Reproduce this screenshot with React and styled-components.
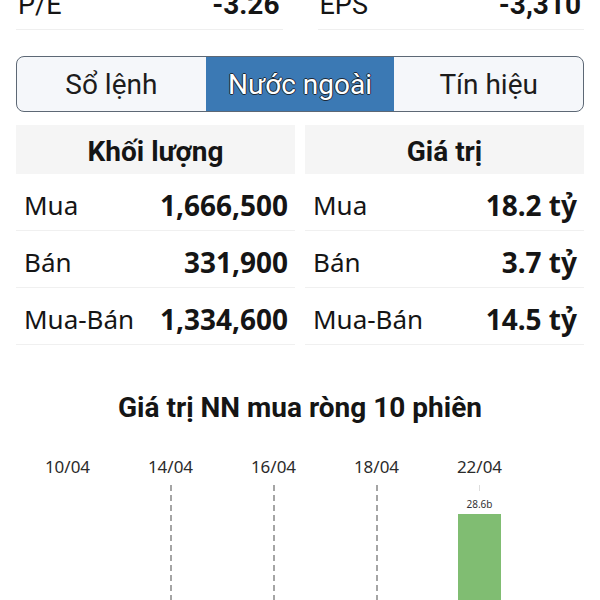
import React from 'react';
import styled, { createGlobalStyle } from 'styled-components';

const GlobalStyle = createGlobalStyle`
  html, body {
    margin: 0;
    padding: 0;
    background: #ffffff;
    overflow: hidden;
  }
  * {
    box-sizing: border-box;
  }
`;

const Page = styled.div`
  width: 600px;
  height: 600px;
  padding: 0 16px;
  overflow: hidden;
  color: #151515;
`;

const StatsRow = styled.div`
  display: grid;
  grid-template-columns: 1fr 1fr;
  column-gap: 35px;
  margin-top: -20px;
`;

const StatCell = styled.div`
  display: flex;
  align-items: center;
  justify-content: space-between;
  height: 50px;
  padding: 0 3px 0 2px;
  border-bottom: 1px solid #efefef;
  font-family: Roboto, 'Noto Sans', sans-serif;
  font-size: 27px;
`;

const StatValue = styled.span`
  font-weight: 700;
  font-size: 28px;
`;

const Tabs = styled.div`
  display: grid;
  grid-template-columns: 1fr 1fr 1fr;
  height: 56px;
  margin-top: 26px;
  border: 1.5px solid #5d6875;
  border-radius: 8px;
  overflow: hidden;
  background: #f5f7fa;
`;

const Tab = styled.div`
  display: flex;
  align-items: center;
  justify-content: center;
  font-family: Roboto, 'Noto Sans', sans-serif;
  font-size: 28px;
  color: ${({ active }) => (active ? '#ffffff' : '#1c1c1c')};
  background: ${({ active }) => (active ? '#3b79b4' : 'transparent')};
  text-shadow: ${({ active }) =>
    active
      ? '1px 0 0 #1d2a38, -1px 0 0 #1d2a38, 0 1px 0 #1d2a38, 0 -1px 0 #1d2a38'
      : 'none'};
`;

const Table = styled.div`
  display: grid;
  grid-template-columns: 1fr 1fr;
  column-gap: 10px;
  margin-top: 13px;
`;

const Column = styled.div`
  display: flex;
  flex-direction: column;
`;

const ColumnHeader = styled.div`
  display: flex;
  align-items: center;
  justify-content: center;
  height: 49px;
  padding-top: 4px;
  background: #f5f5f5;
  font-family: Roboto, 'Noto Sans', sans-serif;
  font-weight: 700;
  font-size: 28px;
`;

const Row = styled.div`
  display: flex;
  align-items: center;
  justify-content: space-between;
  height: 57px;
  padding: 5px 7px 0 8px;
  border-bottom: 1px solid #f0f0f0;
  font-family: 'Noto Sans', 'Open Sans', sans-serif;
  font-size: 26px;
`;

const RowValue = styled.span`
  font-weight: 700;
  font-size: 28px;
`;

const ChartTitle = styled.h2`
  margin: 48px 0 0;
  line-height: 30px;
  text-align: center;
  font-family: Roboto, 'Noto Sans', sans-serif;
  font-weight: 700;
  font-size: 28px;
`;

const Chart = styled.div`
  display: grid;
  grid-template-columns: repeat(5, 103px);
  margin-top: 33px;
`;

const Slot = styled.div`
  display: flex;
  flex-direction: column;
  align-items: center;
`;

const DateLabel = styled.div`
  height: 22px;
  line-height: 22px;
  font-family: 'Noto Sans', 'Open Sans', sans-serif;
  font-size: 17px;
  color: #2b2b2b;
`;

const Plot = styled.div`
  display: flex;
  flex-direction: column;
  align-items: center;
  height: 140px;
  padding-top: 7px;
`;

const GridLine = styled.div`
  flex: 1;
  width: 2px;
  background: repeating-linear-gradient(
    to bottom,
    #a5a5a5 0 6px,
    transparent 6px 10px
  );
`;

const Tick = styled.div`
  width: 0;
  height: 6px;
  border-left: 1px solid #dddddd;
`;

const BarLabel = styled.div`
  margin-top: 6px;
  font-family: 'Noto Sans', 'Open Sans', sans-serif;
  font-size: 10px;
  color: #333333;
`;

const Bar = styled.div`
  width: 43px;
  margin-top: 3px;
  flex: 1;
  background: #80bd72;
`;

const stats = [
  { label: 'P/E', value: '-3.26' },
  { label: 'EPS', value: '-3,310' },
];

const tables = [
  {
    title: 'Khối lượng',
    rows: [
      ['Mua', '1,666,500'],
      ['Bán', '331,900'],
      ['Mua-Bán', '1,334,600'],
    ],
  },
  {
    title: 'Giá trị',
    rows: [
      ['Mua', '18.2 tỷ'],
      ['Bán', '3.7 tỷ'],
      ['Mua-Bán', '14.5 tỷ'],
    ],
  },
];

const sessions = [
  { date: '10/04' },
  { date: '14/04', line: true },
  { date: '16/04', line: true },
  { date: '18/04', line: true },
  { date: '22/04', bar: '28.6b' },
];

export default function App() {
  return (
    <Page>
      <GlobalStyle />
      <StatsRow>
        {stats.map((s) => (
          <StatCell key={s.label}>
            <span>{s.label}</span>
            <StatValue>{s.value}</StatValue>
          </StatCell>
        ))}
      </StatsRow>

      <Tabs>
        <Tab>Sổ lệnh</Tab>
        <Tab active>Nước ngoài</Tab>
        <Tab>Tín hiệu</Tab>
      </Tabs>

      <Table>
        {tables.map((t) => (
          <Column key={t.title}>
            <ColumnHeader>{t.title}</ColumnHeader>
            {t.rows.map(([label, value]) => (
              <Row key={label}>
                <span>{label}</span>
                <RowValue>{value}</RowValue>
              </Row>
            ))}
          </Column>
        ))}
      </Table>

      <ChartTitle>Giá trị NN mua ròng 10 phiên</ChartTitle>
      <Chart>
        {sessions.map((s) => (
          <Slot key={s.date}>
            <DateLabel>{s.date}</DateLabel>
            <Plot>
              {s.line && <GridLine />}
              {s.bar && (
                <>
                  <Tick />
                  <BarLabel>{s.bar}</BarLabel>
                  <Bar />
                </>
              )}
            </Plot>
          </Slot>
        ))}
      </Chart>
    </Page>
  );
}
